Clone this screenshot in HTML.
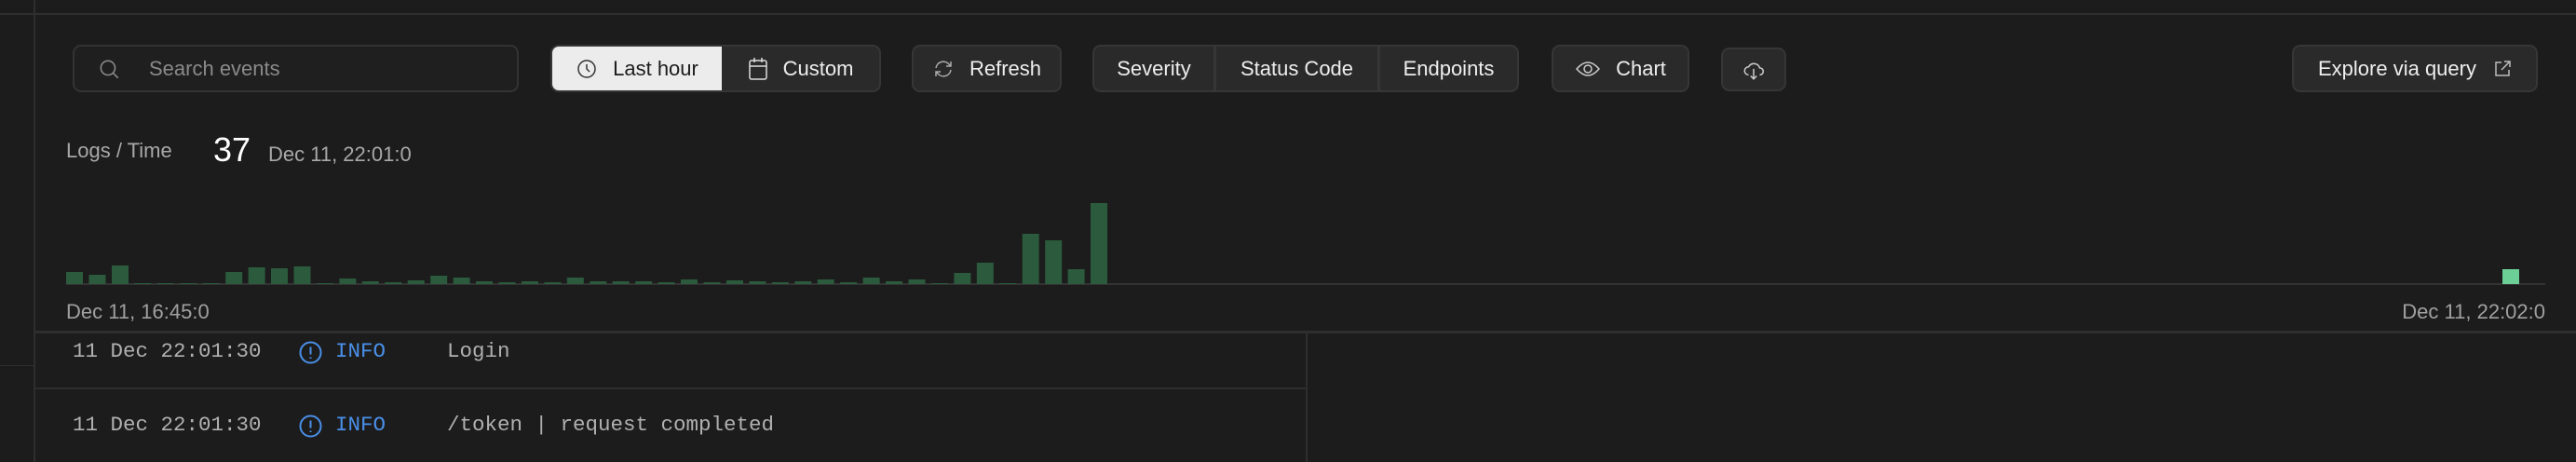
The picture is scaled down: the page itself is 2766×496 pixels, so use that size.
<!DOCTYPE html>
<html><head><meta charset="utf-8"><style>
*{box-sizing:border-box;margin:0;padding:0}
body{width:2766px;height:496px;background:#1c1c1c;position:relative;overflow:hidden;font-family:"Liberation Sans",sans-serif;color:#e8e8e8}
.a{position:absolute}
.btn{position:absolute;top:48px;height:51px;background:#2a2a2a;border:2px solid #363636;border-radius:9px;display:flex;align-items:center;font-size:22px;color:#eee}
.seg{height:100%;display:flex;align-items:center;justify-content:center}
.mono{font-family:"Liberation Mono",monospace;font-size:22.5px;color:#b0b0b0}
svg{display:block}
</style></head><body>
<div class="a" style="left:0;top:14px;width:2766px;height:2px;background:#2e2e2e"></div>
<div class="a" style="left:36px;top:0;width:2px;height:496px;background:#2e2e2e"></div>
<div class="a" style="left:0;top:392px;width:36px;height:1px;background:#2e2e2e"></div>

<!-- search -->
<div class="btn" style="left:78px;width:479px;background:#1f1f1f;border-color:#333">
 <svg style="margin-left:24px" width="26" height="26" viewBox="0 0 24 24" fill="none" stroke="#888" stroke-width="1.5"><circle cx="11" cy="11" r="7"/><path d="M16 16l5 5"/></svg>
 <span style="margin-left:30px;color:#8a8a8a">Search events</span>
</div>

<!-- time group -->
<div class="btn" style="left:591px;width:355px;overflow:hidden">
 <div class="seg" style="width:182px;background:#ececec;color:#1c1c1c">
  <svg width="24" height="24" viewBox="0 0 24 24" fill="none" stroke="#333" stroke-width="1.5"><circle cx="12" cy="12" r="9"/><path d="M12 7v5l3 3"/></svg>
  <span style="margin-left:16px">Last hour</span></div>
 <div class="seg" style="flex:1">
  <svg width="22" height="26" viewBox="0 0 22 26" fill="none" stroke="#ddd" stroke-width="1.5"><rect x="2" y="4" width="18" height="20" rx="2"/><path d="M2 10h18M7 1v5M15 1v5"/></svg>
  <span style="margin-left:16px">Custom</span></div>
</div>

<div class="btn" style="left:979px;width:161px;justify-content:center">
 <svg width="24" height="24" viewBox="0 0 24 24" fill="none" stroke="#aaa" stroke-width="1.5"><path d="M4 11a8 8 0 0 1 14-4l2 2M20 13a8 8 0 0 1-14 4l-2-2M20 4v5h-5M4 20v-5h5"/></svg>
 <span style="margin-left:16px">Refresh</span></div>

<div class="btn" style="left:1173px;width:458px;overflow:hidden">
 <div class="seg" style="width:131px;border-right:3px solid #363636">Severity</div>
 <div class="seg" style="width:176px;border-right:3px solid #363636">Status Code</div>
 <div class="seg" style="flex:1">Endpoints</div>
</div>

<div class="btn" style="left:1666px;width:148px;justify-content:center">
 <svg width="28" height="24" viewBox="0 0 28 24" fill="none" stroke="#ccc" stroke-width="1.5"><path d="M2 12Q14 -2 26 12Q14 26 2 12z"/><circle cx="14" cy="12" r="4"/></svg>
 <span style="margin-left:16px">Chart</span></div>

<div class="btn" style="left:1848px;top:51px;height:47px;width:70px;justify-content:center">
 <svg width="26" height="26" viewBox="0 0 24 24" fill="none" stroke="#ccc" stroke-width="1.4"><path d="M7 17a4 4 0 0 1 0-8a6 6 0 0 1 11 1a3.5 3.5 0 0 1 0 7M12 11v10M9 18l3 3l3-3"/></svg></div>

<div class="btn" style="left:2461px;width:264px;justify-content:center">
 <span>Explore via query</span>
 <svg style="margin-left:18px" width="20" height="20" viewBox="0 0 20 20" fill="none" stroke="#bbb" stroke-width="1.5"><path d="M9 3H3v14h14v-6M12 2h6v6M18 2L9 11"/></svg></div>

<!-- header -->
<div class="a" style="left:71px;top:149px;font-size:22px;color:#a8a8a8">Logs / Time</div>
<div class="a" style="left:229px;top:140px;font-size:36px;color:#fff">37</div>
<div class="a" style="left:288px;top:153px;font-size:22px;color:#a8a8a8">Dec 11, 22:01:0</div>

<!-- chart -->
<div class="a" style="left:71px;top:304px;width:2662px;height:2px;background:#333"></div>
<div id="bars"></div>
<div class="a" style="left:2687px;top:289px;width:18px;height:16px;background:#6ccf96"></div>
<div class="a" style="left:71px;top:322px;font-size:22px;color:#a0a0a0">Dec 11, 16:45:0</div>
<div class="a" style="right:33px;top:322px;font-size:22px;color:#a0a0a0">Dec 11, 22:02:0</div>

<!-- logs -->
<div class="a" style="left:37px;top:355px;width:2729px;height:3px;background:#2e2e2e"></div>
<div class="a" style="left:1402px;top:357px;width:2px;height:139px;background:#2e2e2e"></div>
<div class="a" style="left:37px;top:416px;width:1366px;height:2px;background:#2e2e2e"></div>

<div class="a mono" style="left:78px;top:364px">11 Dec 22:01:30</div>
<svg class="a" style="left:321px;top:366px" width="25" height="25" viewBox="0 0 25 25" fill="none" stroke="#4a8fe8" stroke-width="2"><circle cx="12.5" cy="12.5" r="11"/><path d="M12.5 6.5v8M12.5 17.5v1.5"/></svg>
<div class="a mono" style="left:360px;top:364px;color:#4a8fe8">INFO</div>
<div class="a mono" style="left:480px;top:364px">Login</div>

<div class="a mono" style="left:78px;top:443px">11 Dec 22:01:30</div>
<svg class="a" style="left:321px;top:445px" width="25" height="25" viewBox="0 0 25 25" fill="none" stroke="#4a8fe8" stroke-width="2"><circle cx="12.5" cy="12.5" r="11"/><path d="M12.5 6.5v8M12.5 17.5v1.5"/></svg>
<div class="a mono" style="left:360px;top:443px;color:#4a8fe8">INFO</div>
<div class="a mono" style="left:480px;top:443px">/token | request completed</div>

<div class="a" style="left:71px;top:0">
<svg width="1120" height="306" viewBox="0 0 1120 306" style="position:absolute;left:0;top:0">
<g fill="#2b5a3c">
<rect x="0" y="292" width="18" height="13"/><rect x="24.5" y="295" width="18" height="10"/><rect x="49" y="285" width="18" height="20"/><rect x="73.4" y="304" width="18" height="1"/><rect x="97.8" y="304" width="18" height="1"/><rect x="122.3" y="304" width="18" height="1"/><rect x="146.7" y="304" width="18" height="1"/><rect x="171.2" y="292" width="18" height="13"/><rect x="195.6" y="287" width="18" height="18"/><rect x="220" y="288" width="18" height="17"/><rect x="244.5" y="286" width="18" height="19"/><rect x="269" y="304" width="18" height="1"/><rect x="293.4" y="299" width="18" height="6"/><rect x="317.8" y="302" width="18" height="3"/><rect x="342.3" y="303" width="18" height="2"/><rect x="366.7" y="301" width="18" height="4"/><rect x="391.2" y="296" width="18" height="9"/><rect x="415.6" y="298" width="18" height="7"/><rect x="440" y="302" width="18" height="3"/><rect x="464.5" y="303" width="18" height="2"/><rect x="489" y="302" width="18" height="3"/><rect x="513.4" y="303" width="18" height="2"/><rect x="537.8" y="298" width="18" height="7"/><rect x="562.3" y="302" width="18" height="3"/><rect x="586.7" y="302" width="18" height="3"/><rect x="611.2" y="302" width="18" height="3"/><rect x="635.6" y="303" width="18" height="2"/><rect x="660" y="300" width="18" height="5"/><rect x="684.5" y="303" width="18" height="2"/><rect x="709" y="301" width="18" height="4"/><rect x="733.4" y="302" width="18" height="3"/><rect x="757.8" y="303" width="18" height="2"/><rect x="782.3" y="302" width="18" height="3"/><rect x="806.7" y="300" width="18" height="5"/><rect x="831.2" y="303" width="18" height="2"/><rect x="855.6" y="298" width="18" height="7"/><rect x="880" y="302" width="18" height="3"/><rect x="904.5" y="300" width="18" height="5"/><rect x="929" y="304" width="18" height="1"/><rect x="953.4" y="293" width="18" height="12"/><rect x="977.8" y="282" width="18" height="23"/><rect x="1002.3" y="304" width="18" height="1"/><rect x="1026.7" y="251" width="18" height="54"/><rect x="1051.2" y="258" width="18" height="47"/><rect x="1075.6" y="289" width="18" height="16"/><rect x="1100" y="218" width="18" height="87"/>
</g></svg></div>
</body></html>
